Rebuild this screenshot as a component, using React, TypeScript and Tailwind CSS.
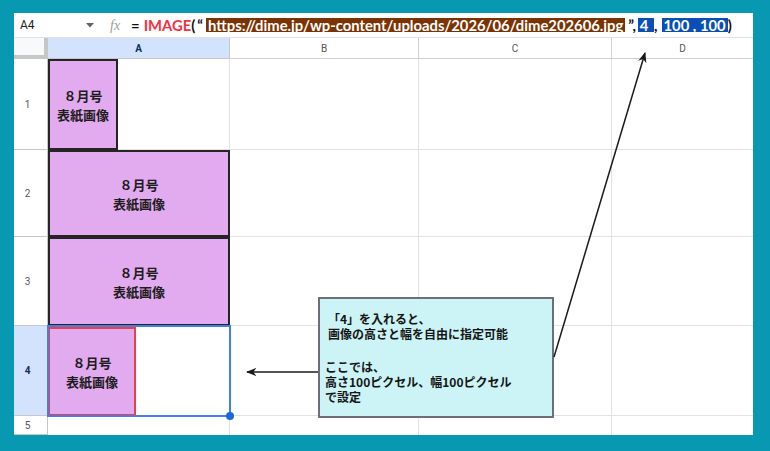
import React from "react";

const CJK = { fontFamily: '"Noto Sans CJK JP", "Noto Sans", sans-serif' };
const UI = { fontFamily: 'Roboto, "Liberation Sans", Arial, sans-serif' };
const FORM = { fontFamily: 'Lato, "Noto Sans", sans-serif' };

function ImgBox({ w, h, red }: { w: number; h: number; red?: boolean }) {
  return (
    <div
      className={
        "shrink-0 bg-[#e2aaef] flex flex-col items-center justify-center font-bold text-[13px] leading-[19px] text-[#1c1c1c] " +
        (red ? "border-2 border-[#f03c48]" : "border-2 border-[#252525]")
      }
      style={{ width: w, height: h, ...CJK }}
    >
      <div>８月号</div>
      <div>表紙画像</div>
    </div>
  );
}

export default function App() {
  const cell = "border-r border-b border-[#e2e2e2]";
  const rowHead =
    "border-r border-b border-[#c7c7c7] flex items-center justify-center pr-[6px] text-[10px] text-[#555]";
  return (
    <div className="w-[770px] h-[451px] bg-[#0898b2] pt-[13px] pl-[14px]">
      <div className="relative w-[739px] h-[422px] bg-white flex flex-col overflow-hidden">
        {/* formula bar */}
        <div className="h-[25px] shrink-0 flex items-center border-b border-[#e1e1e1]">
          <div className="w-[80px] pl-[6px] flex items-center justify-between text-[12px] text-[#1f1f1f]" style={UI}>
            <span>A4</span>
            <svg width="8" height="5" viewBox="0 0 8 5">
              <path d="M0 0 L8 0 L4 4.5 Z" fill="#5f6368" />
            </svg>
          </div>
          <span className="ml-[16px] italic text-[14px] text-[#9e9e9e]" style={{ fontFamily: '"Liberation Serif", serif' }}>
            fx
          </span>
          <div className="ml-[11px] flex items-center font-bold text-[14.8px] text-[#111] whitespace-pre" style={FORM}>
            <span>=</span>
            <span className="ml-[4px] text-[#f4313f]">IMAGE</span>
            <span>(</span>
            <span className="ml-[2px]">“</span>
            <span className="ml-[3px] bg-[#7b3303] text-white px-[2px] leading-[14px]">https://dime.jp/wp-content/uploads/2026/06/dime202606.jpg</span>
            <span className="ml-[3px]">”,</span>
            <span className="ml-[2px] bg-[#0b4fb6] text-white px-[2px] leading-[14px]">4 </span>
            <span>,</span>
            <span className="bg-[#0b4fb6] text-white px-[2px] ml-[4px] leading-[14px]">100 , 100</span>
            <span>)</span>
          </div>
        </div>

        {/* grid */}
        <div
          className="grid grid-cols-[34px_182px_189px_193px_141px] grid-rows-[21px_91px_87px_89px_90px_19px] text-[10px]"
          style={UI}
        >
          {/* header row */}
          <div className="bg-[#f8f9fa] border-r-[4px] border-b-[4px] border-[#c4c7c5]" />
          <div className="bg-[#d3e3fd] border-r border-b border-[#c7c7c7] flex items-center justify-center font-bold text-[#0b2e6e]">A</div>
          <div className="border-r border-b border-[#d0d0d0] flex items-center justify-center text-[#555]">B</div>
          <div className="border-r border-b border-[#d0d0d0] flex items-center justify-center text-[#555]">C</div>
          <div className="border-b border-[#d0d0d0] flex items-center justify-center text-[#555]">D</div>

          {/* row 1 */}
          <div className={rowHead}>1</div>
          <div className={cell + " flex"}>
            <ImgBox w={70} h={91} />
          </div>
          <div className={cell} />
          <div className={cell} />
          <div className="border-b border-[#e2e2e2]" />

          {/* row 2 */}
          <div className={rowHead}>2</div>
          <div className="flex">
            <ImgBox w={182} h={87} />
          </div>
          <div className={cell} />
          <div className={cell} />
          <div className="border-b border-[#e2e2e2]" />

          {/* row 3 */}
          <div className={rowHead}>3</div>
          <div className="flex">
            <ImgBox w={182} h={89} />
          </div>
          <div className={cell} />
          <div className={cell} />
          <div className="border-b border-[#e2e2e2]" />

          {/* row 4 */}
          <div className="bg-[#d3e3fd] border-r border-b border-[#c7c7c7] flex items-center justify-center pr-[6px] font-bold text-[#0b2e6e]">
            4
          </div>
          <div className="relative flex pt-[1px]">
            <ImgBox w={88} h={89} red />
            <div className="absolute -left-[1px] -top-[1px] -right-[1px] -bottom-[1px] border-2 border-[#3f7fe6]" />
            <div className="absolute -right-[4px] -bottom-[4px] w-[8px] h-[8px] rounded-full bg-[#1f66dc]" />
          </div>
          <div className={cell} />
          <div className={cell} />
          <div className="border-b border-[#e2e2e2]" />

          {/* row 5 */}
          <div className={rowHead}>5</div>
          <div className="border-r border-[#e2e2e2]" />
          <div className="border-r border-[#e2e2e2]" />
          <div className="border-r border-[#e2e2e2]" />
          <div />
        </div>

        {/* callout */}
        <div
          className="absolute left-[304px] top-[284px] w-[236px] h-[121px] bg-[#ccf4f6] border-2 border-[#6d6e76] pt-[12px] pl-[5px] font-bold text-[12px] leading-[15px] text-[#151515]"
          style={CJK}
        >
          <div className="pl-[3px]">「4」を入れると、</div>
          <div className="pl-[3px]">画像の高さと幅を自由に指定可能</div>
          <div className="mt-[18px]">ここでは、</div>
          <div>高さ100ピクセル、幅100ピクセル</div>
          <div>で設定</div>
        </div>

        {/* arrows */}
        <svg className="absolute left-0 top-0 pointer-events-none" width="739" height="422">
          <defs>
            <marker id="ah" viewBox="0 0 10 10" refX="9" refY="5" markerWidth="7" markerHeight="7" orient="auto-start-reverse">
              <path d="M0 1 L10 5 L0 9 L3 5 Z" fill="#1a1a1a" />
            </marker>
          </defs>
          <line x1="304" y1="359" x2="233" y2="359" stroke="#1a1a1a" strokeWidth="1.5" markerEnd="url(#ah)" />
          <line x1="540" y1="344" x2="631" y2="40" stroke="#1a1a1a" strokeWidth="1.5" markerEnd="url(#ah)" />
        </svg>
      </div>
    </div>
  );
}
